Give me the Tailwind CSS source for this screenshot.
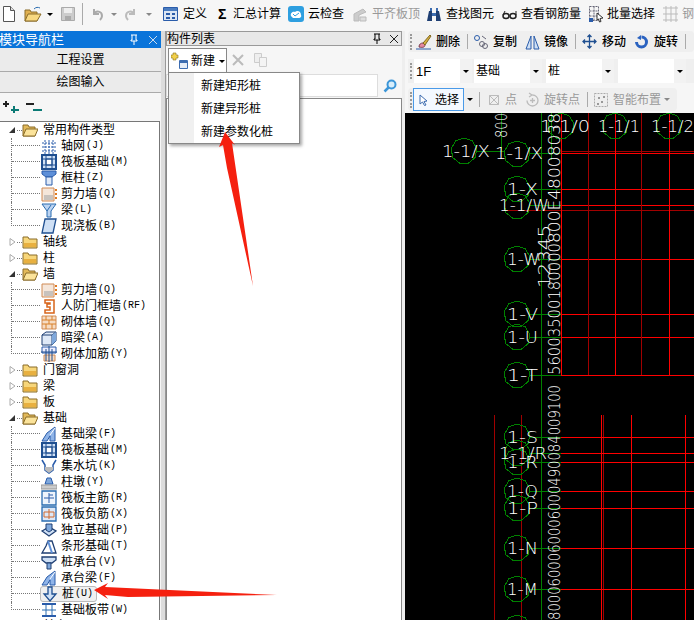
<!DOCTYPE html>
<html lang="zh">
<head>
  <meta charset="UTF-8" />
  <title>构件列表</title>
  <script src="https://cdn.jsdelivr.net/npm/@tailwindcss/browser@4"></script>
</head>
<body class="relative h-[620px] w-[694px] overflow-hidden bg-[#f6f6f6] text-[12px] leading-none text-black font-['Liberation_Sans','Noto_Sans_CJK_SC',sans-serif]">

  <!-- main toolbar -->
  <div class="flex h-[28px] items-center whitespace-nowrap *:shrink-0">
    <svg class="ml-[3px] h-4 w-3" viewBox="0 0 12 16"><path d="M.5.5h7l4 4v11H.5z" fill="#fff" stroke="#555"/><path d="M7.5.5v4h4" fill="#ddd" stroke="#555"/></svg>
    <svg class="ml-[9px] h-4 w-[18px]" viewBox="0 0 18 16"><path d="M1 4h5l1 2h6v9H1z" fill="#e0b050" stroke="#8a6d2a"/><path d="M1 15l3-7h13l-4 7z" fill="#f8d880" stroke="#8a6d2a"/><path d="M10 3c2-2 4-2 6-1" fill="none" stroke="#2a6cb0"/></svg>
    <span class="ml-[5px] h-0 w-0 border-x-[3px] border-t-[3px] border-x-transparent border-t-black"></span>
    <svg class="ml-[8px] h-4 w-[14px]" viewBox="0 0 14 16"><path d="M.5 1.5h13v13H.5z" fill="#ccc" stroke="#aaa"/><path d="M3 2h8v5H3z" fill="#eee"/><path d="M4 10h6v4H4z" fill="#aaa"/></svg>
    <span class="ml-[7px] h-[22px] w-px bg-[#aaa]"></span>
    <svg class="ml-[8px] h-4 w-3" viewBox="0 0 12 16"><path d="M3 3v5h5M3 8c2-4 8-3 8 2 0 2-1 3-2 4" fill="none" stroke="#aaa" stroke-width="2"/></svg>
    <span class="ml-[8px] h-0 w-0 border-x-[3px] border-t-[3px] border-x-transparent border-t-[#888]"></span>
    <svg class="ml-[8px] h-4 w-3" viewBox="0 0 12 16"><path d="M9 3v5H4M9 8C7 4 1 5 1 10c0 2 1 3 2 4" fill="none" stroke="#bbb" stroke-width="2"/></svg>
    <span class="ml-[9px] h-0 w-0 border-x-[3px] border-t-[3px] border-x-transparent border-t-[#888]"></span>

    <svg class="ml-[11px] h-[14px] w-[15px]" viewBox="0 0 15 14"><path d="M.5.5h14v13H.5z" fill="#dbe6f4" stroke="#2a5caa"/><path d="M1 1h13v3H1z" fill="#4a7cc0"/><path d="M3 6h4v2H3zM9 6h3v2H9zM3 10h4v2H3zM9 10h3v2H9z" fill="#2a5caa"/></svg>
    <span class="ml-[5px]">定义</span>
    <span class="ml-[11px] w-[10px] text-[14px] font-bold">Σ</span>
    <span class="ml-[5px]">汇总计算</span>
    <svg class="ml-[7px] h-4 w-4" viewBox="0 0 16 16"><rect width="16" height="16" rx="3" fill="#2e9fe0"/><path d="M3 10c-1-3 2-5 4-4 2-2 6-1 6 3 1 2-1 3-2 3H5z" fill="#fff"/><path d="M5 8l2 2 4-3" fill="none" stroke="#2e9fe0"/></svg>
    <span class="ml-[4px]">云检查</span>
    <svg class="ml-[8px] h-4 w-4" viewBox="0 0 16 16"><path d="M2 15V8l9-5 3 3-7 3v6z" fill="#ccc" stroke="#bbb"/><path d="M8 15v-4h6v4z" fill="#ddd" stroke="#bbb"/></svg>
    <span class="ml-[4px] text-[#999]">平齐板顶</span>
    <svg class="ml-[6px] h-4 w-4" viewBox="0 0 16 16"><path d="M1 15l2-10h3v10zM10 15V5h3l2 10z" fill="#1f3f73"/><path d="M6 7h4v3H6zM4 2h2v3H4zM10 2h2v3h-2z" fill="#3c6cb0"/></svg>
    <span class="ml-[4px]">查找图元</span>
    <svg class="ml-[8px] h-4 w-[15px]" viewBox="0 0 15 16"><ellipse cx="4" cy="10" rx="3" ry="2.5" fill="none" stroke="#222" stroke-width="1.5"/><ellipse cx="11" cy="10" rx="3" ry="2.5" fill="none" stroke="#222" stroke-width="1.5"/><path d="M1 9l2-4M14 9V5" stroke="#222"/></svg>
    <span class="ml-[4px]">查看钢筋量</span>
    <svg class="ml-[7px] h-[18px] w-4" viewBox="0 0 16 18"><path d="M1.500 1.500h9v14h-9zM1.500 6h9M1.500 11h9M6 1.500v14" fill="none" stroke="#667" stroke-dasharray="2 1"/><path d="M9 8l6 5-3 .5 1 3-1.500.5-1-3L9 15z" fill="#fff" stroke="#333"/><path d="M1 13h4v4H1z" fill="#2a5caa"/></svg>
    <span class="ml-[3px]">批量选择</span>
    <svg class="ml-[7px] h-[18px] w-[17px]" viewBox="0 0 17 18"><path d="M1 3h15M1 9h15M1 15h15M4 1v16M9 1v16M14 1v16" stroke="#bbb" fill="none"/></svg>
    <span class="ml-[3px] text-[#999]">钢筋</span>
  </div>

  <div class="mt-[3px] flex h-[589px]">
    <!-- module navigator -->
    <div class="flex w-[161px] flex-col">
      <div class="flex h-[17px] items-center bg-[#0a74da] text-[13px] text-white">
        <span class="ml-[-1px]">模块导航栏</span>
        <svg class="ml-auto h-3 w-3" viewBox="0 0 12 12"><path d="M3 1h6M4 1v5H3v1h6V6H8V1M6 7v4" fill="none" stroke="#fff"/></svg>
        <svg class="ml-[8px] mr-[3px] h-[10px] w-[10px]" viewBox="0 0 10 10"><path d="M1 1l8 8M9 1L1 9" stroke="#cde" fill="none"/></svg>
      </div>
      <div class="flex h-[24px] items-center justify-center border-b border-[#aaa] bg-[#ebebeb]">工程设置</div>
      <div class="flex h-[21px] items-center justify-center border-b border-[#aaa] bg-[#ebebeb]">绘图输入</div>
      <div class="flex h-[28px] items-center gap-[7px] pl-[3px]">
        <svg class="h-[14px] w-4" viewBox="0 0 16 14"><path d="M3 1v6M0 4h6" stroke="#222" stroke-width="2"/><path d="M11 6v7M8 10h8" stroke="#0b7a75" stroke-width="2"/></svg>
        <svg class="h-[14px] w-4" viewBox="0 0 16 14"><path d="M0 4h8" stroke="#222" stroke-width="2"/><path d="M7 10h9" stroke="#0b7a75" stroke-width="2"/></svg>
      </div>
      <div id="tree" class="mr-px flex-1 overflow-hidden border-r border-t border-[#777] bg-white"></div>
    </div>

    <div class="h-full w-[5px] border-r border-[#999] bg-[#dcdcdc]"></div>

    <!-- component list -->
    <div class="flex w-[236px] flex-col">
      <div class="flex h-[15px] items-center border border-[#999] bg-[#e8e8e8]">
        <span>构件列表</span>
        <svg class="ml-auto h-3 w-3" viewBox="0 0 12 12"><path d="M3 1h6M4 1v5H3v1h6V6H8V1M6 7v4" fill="none" stroke="#000"/></svg>
        <svg class="ml-[6px] mr-[2px] h-[10px] w-[10px]" viewBox="0 0 10 10"><path d="M1 1l8 8M9 1L1 9" stroke="#222" fill="none"/></svg>
      </div>
      <div class="flex h-[27px] items-center whitespace-nowrap pl-[2px] *:shrink-0">
        <div class="mt-[2px] flex h-[25px] w-[59px] items-center border border-b-0 border-[#888] bg-white pl-[2px] *:shrink-0">
          <svg class="h-[18px] w-[18px]" viewBox="0 0 18 18"><path d="M2 1h3v2h2v3H5v2H2V6H0V3h2z" fill="#f2d04a" stroke="#8a7420" stroke-width=".6"/><path d="M8.500 8.500h8v8h-8z" fill="#e4ecf7" stroke="#3c6cb0"/><path d="M9 9h7v2H9z" fill="#3c6cb0"/></svg>
          <span class="ml-[2px]">新建</span>
          <span class="ml-[4px] h-0 w-0 border-x-[3px] border-t-[3px] border-x-transparent border-t-black"></span>
        </div>
        <svg class="ml-[5px] h-3 w-3" viewBox="0 0 12 12"><path d="M1 1l10 10M11 1L1 11" stroke="#bbb" stroke-width="2"/></svg>
        <svg class="ml-[9px] h-[15px] w-[15px]" viewBox="0 0 15 15"><path d="M1.500 1.500h7v9h-7z" fill="#eee" stroke="#ccc"/><path d="M6.500 5.500h7v9h-7z" fill="#f4f4f4" stroke="#ccc"/></svg>
      </div>
      <div class="flex h-[26px] items-center border-b border-[#888]">
        <div class="h-[23px] w-[212px] border border-[#ddd] bg-white"></div>
        <svg class="ml-[5px] h-[14px] w-[14px]" viewBox="0 0 14 14"><circle cx="8.500" cy="5.500" r="4" fill="#d8eefb" stroke="#3c96d8" stroke-width="2"/><path d="M5.500 8.500L1.500 12.500" stroke="#3c96d8" stroke-width="2.500"/></svg>
      </div>
      <div class="flex-1 border-x border-[#888] bg-white"></div>
    </div>

    <div class="h-full w-[3px] bg-[#eeeeee]"></div>

    <!-- drawing area -->
    <div class="flex w-[289px] flex-col whitespace-nowrap">
      <div class="ml-[3px] flex h-[21px] items-center rounded-sm bg-[#efefef] pl-[2px] font-medium *:shrink-0">
        <span class="h-4 w-[2px] border-l-2 border-dotted border-[#999]"></span>
        <svg class="ml-[4px] h-4 w-4" viewBox="0 0 16 16"><path d="M0 15h15" stroke="#2a5caa"/><path d="M3 13c0-3 2-4 4-4l2 2c0 2-2 3-6 2z" fill="#e58aa0" stroke="#7a3d50"/><path d="M7 9l7-8 1 1-6 9z" fill="#d8b040" stroke="#806820"/></svg>
        <span class="ml-[4px]">删除</span>
        <span class="ml-[7px] h-[15px] w-px bg-[#aaa]"></span>
        <svg class="ml-[5px] h-4 w-4" viewBox="0 0 16 16"><circle cx="4" cy="4" r="2.500" fill="none" stroke="#2a5caa"/><circle cx="9" cy="10" r="2.500" fill="none" stroke="#667"/><circle cx="12" cy="12" r="2.500" fill="none" stroke="#667"/><path d="M9 2l4 3" stroke="#667"/></svg>
        <span class="ml-[4px]">复制</span>
        <svg class="ml-[8px] h-4 w-[15px]" viewBox="0 0 15 16"><path d="M6 2v13H1zM9 2v13h5z" fill="#cfe0f5" stroke="#2a5caa"/></svg>
        <span class="ml-[4px]">镜像</span>
        <span class="ml-[7px] h-[15px] w-px bg-[#aaa]"></span>
        <svg class="ml-[6px] h-[15px] w-[15px]" viewBox="0 0 15 15"><path d="M7.500 1v13M1 7.500h13M5.500 3l2-2 2 2M5.500 12l2 2 2-2M3 5.500l-2 2 2 2M12 5.500l2 2-2 2" fill="none" stroke="#1f4f90" stroke-width="1.300"/></svg>
        <span class="ml-[5px]">移动</span>
        <svg class="ml-[9px] h-[14px] w-[13px]" viewBox="0 0 13 14"><path d="M6.500 2a5 5 0 1 1-5 5" fill="none" stroke="#2a62c0" stroke-width="3"/><path d="M6 0L2 3l4 2z" fill="#2a62c0"/></svg>
        <span class="ml-[6px]">旋转</span>
        <span class="ml-[7px] h-[15px] w-px bg-[#aaa]"></span>
      </div>
      <div class="ml-[3px] mt-[7px] flex h-[24px] items-center bg-[#efefef] pl-[2px] *:shrink-0">
        <span class="h-4 w-[2px] border-l-2 border-dotted border-[#999]"></span>
        <div class="ml-[2px] flex h-[24px] w-[58px] items-center justify-between bg-white pl-[2px] text-[13px]"><span>1F</span><span class="flex h-full w-[12px] items-center justify-center bg-[#f2f2f2]"><span class="h-0 w-0 border-x-[3px] border-t-[3px] border-x-transparent border-t-black"></span></span></div>
        <div class="ml-[2px] flex h-[24px] w-[68px] items-center justify-between bg-white pl-[2px]"><span>基础</span><span class="flex h-full w-[12px] items-center justify-center bg-[#f2f2f2]"><span class="h-0 w-0 border-x-[3px] border-t-[3px] border-x-transparent border-t-black"></span></span></div>
        <div class="ml-[4px] flex h-[24px] w-[68px] items-center justify-between bg-white pl-[2px]"><span>桩</span><span class="flex h-full w-[12px] items-center justify-center bg-[#f2f2f2]"><span class="h-0 w-0 border-x-[3px] border-t-[3px] border-x-transparent border-t-black"></span></span></div>
        <div class="ml-[4px] flex h-[24px] w-[68px] items-center justify-end bg-white"><span class="flex h-full w-[12px] items-center justify-center bg-[#f2f2f2]"><span class="h-0 w-0 border-x-[3px] border-t-[3px] border-x-transparent border-t-black"></span></span></div>
      </div>
      <div class="ml-[3px] mt-[5px] flex h-[23px] w-[269px] items-center rounded-sm bg-[#efefef] pl-[2px] *:shrink-0">
        <span class="h-4 w-[2px] border-l-2 border-dotted border-[#999]"></span>
        <div class="ml-[1px] flex h-[23px] w-[51px] items-center border border-[#4a9ae8] bg-[#f4f9ff] pl-[5px]">
          <svg class="h-3 w-[10px]" viewBox="0 0 10 12"><path d="M1 1l7 6-3 .5 2 3.500-1.500.5-2-3.500L1 10z" fill="#fff" stroke="#3c6cb0"/></svg>
          <span class="ml-[6px]">选择</span>
        </div>
        <span class="ml-[3px] h-0 w-0 border-x-[3px] border-t-[3px] border-x-transparent border-t-black"></span>
        <span class="ml-[6px] h-[15px] w-px bg-[#aaa]"></span>
        <svg class="ml-[8px] h-3 w-3" viewBox="0 0 12 12"><path d="M1.500 1.500h9v9h-9zM1.500 1.500l9 9M10.500 1.500l-9 9" fill="none" stroke="#bbb"/></svg>
        <span class="ml-[5px] text-[#999]">点</span>
        <svg class="ml-[8px] h-[15px] w-[15px]" viewBox="0 0 15 15"><path d="M7.500 3a5.500 5.500 0 1 1-5.500 5.500M4 1l3 2-3 2M7.500 6v5M5 8.500h5" fill="none" stroke="#bbb" stroke-width="1.300"/></svg>
        <span class="ml-[4px] text-[#999]">旋转点</span>
        <span class="ml-[7px] h-[15px] w-px bg-[#aaa]"></span>
        <svg class="ml-[6px] h-[14px] w-[14px]" viewBox="0 0 14 14"><path d="M.5.5h13v13H.5z" fill="#eee" stroke="#aaa" stroke-dasharray="2 1"/><path d="M4 4h2v2H4zM9 3h2v2H9zM7 8h2v2H7zM3 10h2v2H3z" fill="#999"/></svg>
        <span class="ml-[5px] text-[#999]">智能布置</span>
        <span class="ml-[3px] h-0 w-0 border-x-[3px] border-t-[3px] border-x-transparent border-t-[#888]"></span>
      </div>
      <svg id="cad" class="mt-[2px] block h-[507px] w-[289px] shrink-0 bg-black" viewBox="405 113 289 507" shape-rendering="crispEdges"></svg>
    </div>
  </div>

  <!-- dropdown of the 新建 button -->
  <div class="absolute left-[168px] top-[72px] h-[72px] w-[132px] border border-[#888] bg-white shadow-[2px_2px_3px_rgba(0,0,0,0.35)]">
    <div class="flex h-full">
      <div class="w-[25px] bg-[#f0f0f0]"></div>
      <div class="flex flex-col gap-[11px] pl-[7px] pt-[7px]">
        <span class="h-3">新建矩形桩</span>
        <span class="h-3">新建异形桩</span>
        <span class="h-3">新建参数化桩</span>
      </div>
    </div>
  </div>

  <!-- red annotation arrows -->
  <svg class="absolute left-0 top-0" width="694" height="620" viewBox="0 0 694 620">
    <path d="M225 132L235 145 232 143 253 286 227 168 223 145 219 147z" fill="#f5200f"/>
    <path d="M94 590L108 583 105 587 277 595 128 597 105 595 108 599z" fill="#f5200f"/>
  </svg>

  <script>
    const icons = {
      grid: '<path d="M1 5h14M1 9h14M1 13h14M4 2v14M8 2v14M12 2v14" stroke="#2a5caa" fill="none" stroke-dasharray="2 1"/>',
      raft: '<path d="M1 1h14v14H1z" fill="#cfe0f5" stroke="#1f4f90" stroke-width="2"/><path d="M5 5h6v6H5z" fill="#fff" stroke="#1f4f90"/><path d="M1 5h14M1 11h14M5 1v14M11 1v14" stroke="#1f4f90"/>',
      col: '<path d="M1 1h14v3l-4 3H5L1 4z" fill="#5d8fd8" stroke="#2a5caa"/><path d="M5 7h6v8H5z" fill="#dfe9f7" stroke="#2a5caa"/>',
      shear: '<path d="M1 2h12v13H1z" fill="#f5e6da" stroke="#d08a55"/><path d="M3 9h9v5H3z" fill="#aaa" opacity=".6"/><path d="M15 3v11" stroke="#e07a20" stroke-dasharray="2 2" stroke-width="2"/>',
      beam: '<path d="M1 2h14l-5 7v6H6V9z" fill="#bcd4f2" stroke="#2a6cb0"/><path d="M10 3L6 9" stroke="#2a6cb0"/>',
      slab: '<path d="M4 1h11l-3 14H1z" fill="#cfe0f5" stroke="#1f4f90" stroke-width="1.300"/>',
      rf: '<path d="M4 2h9v13H4v-3h5V9H6V6h3V5H4z" fill="#fff" stroke="#d8641a" stroke-width="1.500"/>',
      brick: '<path d="M1 2h14v13H1z" fill="#f6dcc4" stroke="#d08a55"/><path d="M1 6h14M1 10h14M5 2v4M11 2v4M8 6v4M5 10v5M11 10v5" stroke="#d8802a"/>',
      hidden: '<path d="M1 5l4-3h10v9l-4 4H1z" fill="#dfe9f7" stroke="#1f3f73"/><path d="M1 5h10v10M11 5l4-3" stroke="#1f3f73" fill="none"/><path d="M11 5l4-3v9l-4 4z" fill="#7fa8dc"/>',
      rebar: '<path d="M1 1h14v6H1z" fill="#eef" stroke="#2a5caa"/><path d="M3 9h11v6H3z" fill="#f6dcc4" stroke="#d08a55"/><path d="M8 0v16M0 6h16M5 3v12M11 3v12" stroke="#1f4f90"/>',
      fbeam: '<path d="M1 15l5-8 8-6v14H9V10L6 15z" fill="#8fb4e8" stroke="#2a5caa"/><path d="M9 9l5-7" stroke="#fff"/>',
      pit: '<path d="M1 2l3 5v5l4 3 4-3V7l3-5" fill="none" stroke="#2a5caa" stroke-width="1.500"/><path d="M4 9h8v3l-4 3-4-3z" fill="#bbb"/>',
      pier: '<path d="M6 4h4l2 6H4z" fill="#7fa8dc" stroke="#2a5caa"/><path d="M0 11h16v4H0z" fill="#ccc" stroke="#999"/>',
      main: '<path d="M1 1h14v14H1z" fill="#eef4fc" stroke="#2a6cb0" stroke-width="1.300"/><path d="M3 8h10M8 3v10M8 5h4" stroke="#2a5caa"/>',
      neg: '<path d="M1 1h14v14H1z" fill="#dce8f8" stroke="#2a6cb0" stroke-width="1.300"/><path d="M3 6h10v5H3zM8 3v10" fill="none" stroke="#d06a30"/>',
      indep: '<path d="M1 9l7-4 7 4-7 5z" fill="#cfe0f5" stroke="#1f3f73" stroke-width="1.300"/><path d="M5 8V2h6v6l-3 2z" fill="#7fa8dc" stroke="#1f3f73"/>',
      strip: '<path d="M1 15l4-7 2-5h4l4 12z" fill="#fff" stroke="#1f3f73" stroke-width="1.300"/><path d="M7 3l4 12" stroke="#5d8fd8" stroke-width="2"/>',
      cap: '<path d="M1 3h14v3l-4 3H5L1 6z" fill="#cfe0f5" stroke="#1f3f73" stroke-width="1.300"/><path d="M6 9h4v6H6z" fill="#7fa8dc" stroke="#1f3f73"/>',
      pile: '<path d="M6 1h4v7h4l-6 7-6-7h4z" fill="#cfe0f5" stroke="#1f4f90" stroke-width="1.300"/>',
      band: '<path d="M1 2h14M1 14h14" stroke="#2a5caa" stroke-width="2"/><path d="M5 3v10M11 3v10M1 8h14" stroke="#2a6cb0"/>'
    };

    // [level, label, shortcut, icon, state]
    const rows = [
      [0, '常用构件类型', '', '', 'open'],
      [1, '轴网', '(J)', 'grid'], [1, '筏板基础', '(M)', 'raft'], [1, '框柱', '(Z)', 'col'],
      [1, '剪力墙', '(Q)', 'shear'], [1, '梁', '(L)', 'beam'], [1, '现浇板', '(B)', 'slab', 'last'],
      [0, '轴线'], [0, '柱'],
      [0, '墙', '', '', 'open'],
      [1, '剪力墙', '(Q)', 'shear'], [1, '人防门框墙', '(RF)', 'rf'], [1, '砌体墙', '(Q)', 'brick'],
      [1, '暗梁', '(A)', 'hidden'], [1, '砌体加筋', '(Y)', 'rebar', 'last'],
      [0, '门窗洞'], [0, '梁'], [0, '板'],
      [0, '基础', '', '', 'open'],
      [1, '基础梁', '(F)', 'fbeam'], [1, '筏板基础', '(M)', 'raft'], [1, '集水坑', '(K)', 'pit'],
      [1, '柱墩', '(Y)', 'pier'], [1, '筏板主筋', '(R)', 'main'], [1, '筏板负筋', '(X)', 'neg'],
      [1, '独立基础', '(P)', 'indep'], [1, '条形基础', '(T)', 'strip'], [1, '桩承台', '(V)', 'cap'],
      [1, '承台梁', '(F)', 'fbeam'], [1, '桩', '(U)', 'pile', 'active'], [1, '基础板带', '(W)', 'band', 'last'],
      [0, '其它']
    ];

    const openFolder = '<path d="M1 3h5l1 2h6v9H1z" fill="#e2b95a" stroke="#8a6d2a"/><path d="M1 14l3-7h12l-3 7z" fill="#fbe39a" stroke="#8a6d2a"/>';
    const closedFolder = '<path d="M1 3h5l1 2h8v9H1z" fill="#f7d67a" stroke="#8a6d2a"/><path d="M2 9h12v4H2z" fill="#e8b040"/>';

    function renderRow([level, label, key, icon, state]) {
      if (level === 0) {
        const arrow = state === 'open'
          ? '<path d="M6 1v6H0z" fill="#333"/>'
          : '<path d="M1 .5l5 3.500-5 3.500z" fill="#fff" stroke="#aaa"/>';
        return `<div class="flex h-4 items-center pl-[9px]">
          <svg class="h-2 w-[7px]" viewBox="0 0 7 8">${arrow}</svg>
          <span class="ml-px w-[5px] border-b border-dotted border-[#777]"></span>
          <svg class="h-4 w-4" viewBox="0 0 16 16">${state === 'open' ? openFolder : closedFolder}</svg>
          <span class="ml-[5px]">${label}</span>
        </div>`;
      }
      const line = state === 'last'
        ? '<div class="h-2 border-b border-l border-dotted border-[#777]"></div>'
        : '<div class="h-4 border-l border-dotted border-[#777]"><div class="h-2 border-b border-dotted border-[#777]"></div></div>';
      const box = state === 'active'
        ? 'flex h-4 items-center rounded-[3px] border border-[#bbb] bg-[#f0f0f0] pr-[3px]'
        : 'flex h-4 items-center';
      return `<div class="flex h-4 items-start pl-[11px]">
        <div class="h-4 w-[29px]">${line}</div>
        <div class="${box}">
          <svg class="ml-px h-4 w-4" viewBox="0 0 16 16">${icons[icon]}</svg>
          <span class="ml-[4px]">${label}</span>
          <span class="ml-px text-[10px] font-['Liberation_Mono',monospace]">${key}</span>
        </div>
      </div>`;
    }
    document.getElementById('tree').innerHTML = rows.map(renderRow).join('');

    // CAD drawing, coordinates are page pixels
    const RED = '#ff0000', DARK = '#a00000', GREEN = '#008000';
    const hLine = (x1, x2, y, c) => `<rect x="${x1}" y="${y}" width="${x2 - x1}" height="1" fill="${c}"/>`;
    const vLine = (x, y1, y2, c) => `<rect x="${x}" y="${y1}" width="1" height="${y2 - y1}" fill="${c}"/>`;
    const bubble = (cx, cy) => {
      const pts = [...Array(9).keys()].map(i => {
        const a = i * Math.PI * 2 / 9 - Math.PI / 2;
        return (cx + 13 * Math.cos(a)).toFixed(1) + ',' + (cy + 13 * Math.sin(a)).toFixed(1);
      }).join(' ');
      return `<polygon points="${pts}" fill="none" stroke="${GREEN}"/>`;
    };
    const cadFont = 'fill="#fff" font-size="16" font-weight="200" font-family="DejaVu Sans"';
    const label = (x, y, w, t) => `<text x="${x}" y="${y + 6}" textLength="${w}" lengthAdjust="spacingAndGlyphs" ${cadFont}>${t}</text>`;
    const dim = (x, y, w, t) => `<text transform="translate(${x} ${y}) rotate(-90)" textLength="${w}" lengthAdjust="spacingAndGlyphs" ${cadFont}>${t}</text>`;

    let s = '';
    [153, 189, 205, 259, 314, 337, 375].forEach(y => s += hLine(561, 694, y, RED));
    s += hLine(561, 694, 151, DARK) + hLine(507, 694, 210, DARK);
    [561, 615, 669].forEach(x => s += vLine(x, 113, 375, RED));
    [588, 641].forEach(x => s += vLine(x, 113, 375, DARK));
    [494, 521, 603].forEach(x => s += vLine(x, 415, 620, DARK));
    [601, 631, 685].forEach(x => s += vLine(x, 415, 620, RED));
    [437, 453, 462, 491, 508, 548, 589].forEach(y => s += hLine(561, 694, y, RED));

    s += vLine(541, 113, 620, GREEN) + vLine(501, 113, 151, GREEN) + vLine(551, 113, 160, GREEN);
    [153, 189, 205, 259, 314, 337, 375, 437, 453, 462, 491, 508, 548, 589].forEach(y => s += hLine(530, 561, y, GREEN));
    s += hLine(477, 504, 151, GREEN);

    [[561, 126], [615, 126], [669, 126], [464, 151], [517, 154], [517, 189], [517, 206], [517, 259], [517, 314], [517, 337], [517, 375],
     [517, 437], [517, 453], [517, 462], [517, 491], [517, 508], [517, 548], [517, 589], [517, 628]].forEach(c => s += bubble(c[0], c[1]));

    [[442, 151, 48, '1-1/X'], [495, 153, 48, '1-1/X'], [507, 189, 31, '1-X'], [499, 205, 50, '1-1/W'], [507, 259, 33, '1-W'],
     [507, 314, 31, '1-V'], [507, 337, 31, '1-U'], [507, 375, 31, '1-T'], [507, 437, 31, '1-S'], [499, 453, 48, '1-1/R'],
     [507, 462, 31, '1-R'], [507, 491, 31, '1-Q'], [507, 508, 31, '1-P'], [507, 548, 31, '1-N'], [507, 589, 31, '1-M'],
     [540, 126, 50, '1-1/0'], [598, 126, 42, '1-1/1'], [651, 126, 43, '1-1/2']].forEach(l => s += label(l[0], l[1], l[2], l[3]));

    s += dim(507, 138, 25, '800') + dim(550, 288, 63, '12345');
    s += dim(560, 620, 235, '8000600060006000490084009100');
    s += dim(560, 375, 132, '56003500180000');
    s += dim(560, 243, 130, '800E48008038');
    document.getElementById('cad').innerHTML = s;
  </script>
</body>
</html>
